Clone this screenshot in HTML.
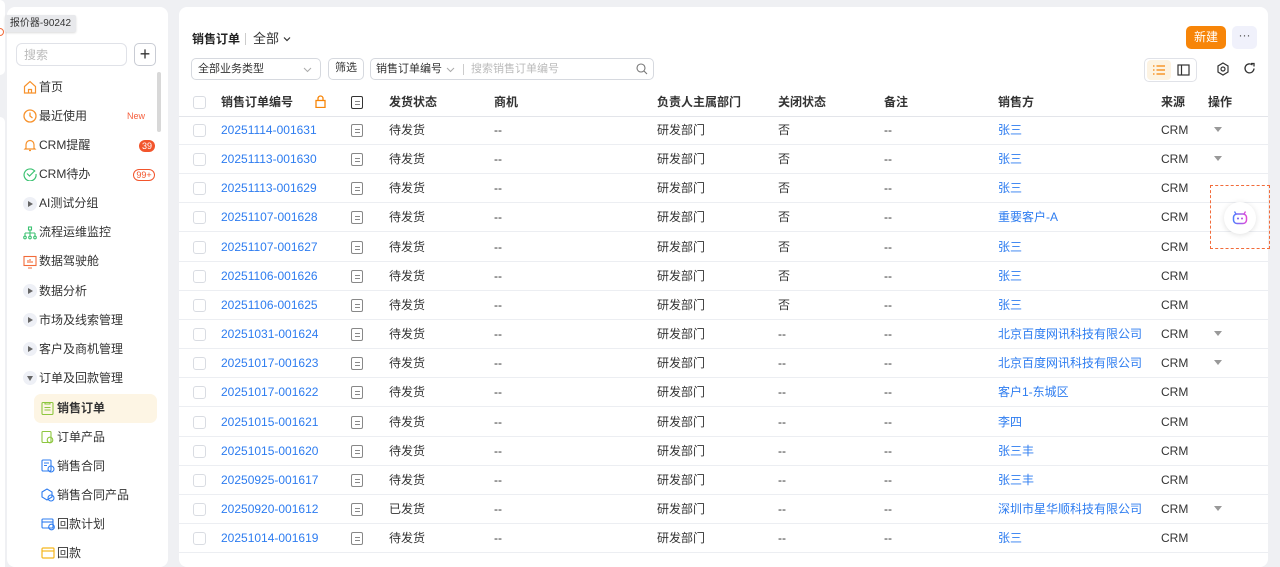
<!DOCTYPE html><html><head><meta charset="utf-8"><style>
*{box-sizing:border-box;margin:0;padding:0}
body{width:1280px;height:558px;overflow:hidden;background:#eff0f3;font-family:"Liberation Sans","Noto Sans CJK SC",sans-serif;font-size:12px;line-height:16px;color:#333;position:relative}
.a{position:absolute}
.side{left:7px;top:7px;width:161px;height:560px;background:#fff;border-radius:8px}
.main{left:179px;top:7px;width:1089px;height:560px;background:#fff;border-radius:8px}
.mi{position:absolute;left:24px;font-size:12px;line-height:16px;color:#333;white-space:nowrap}
.ic{position:absolute;left:16px;width:14px;height:14px}
.tri{position:absolute;left:16px;width:14px;height:14px;border-radius:50%;background:#eef0f6}
.tri:after{content:"";position:absolute;left:5px;top:3.5px;border-left:5px solid #666;border-top:3.5px solid transparent;border-bottom:3.5px solid transparent}
.tri.d:after{left:3.5px;top:5px;border-top:5px solid #666;border-left:3.5px solid transparent;border-right:3.5px solid transparent;border-bottom:0}
.row{position:absolute;left:0;width:1089px;height:29px;border-bottom:1px solid #eceef2}
.row span{position:absolute;top:6px;line-height:16px;height:16px;white-space:nowrap}
.cb{position:absolute;left:14px;top:8px;width:13px;height:13px;border:1px solid #d9dce2;border-radius:3px;background:#fff}
.lk{color:#2d7cf0}
.doc{position:absolute;left:172px;top:8px;width:12px;height:13px;border:1.2px solid #888;border-radius:2px}
.doc:before,.doc:after{content:"";position:absolute;left:2.5px;width:5px;height:1px;background:#888}
.doc:before{top:4px}.doc:after{top:7px}
.dd{position:absolute;left:1035px;top:11px;border-top:5px solid #999;border-left:4.5px solid transparent;border-right:4.5px solid transparent}
.hd span{font-weight:bold;color:#333}
</style></head><body>
<div class="a" style="left:0;top:0;width:5px;height:75px;background:#fff;border-radius:0 6px 6px 0"></div>
<div class="a" style="left:0;top:117px;width:5px;height:450px;background:#fff;border-radius:0 6px 0 0"></div>
<div class="a" style="left:-4px;top:28px;width:8px;height:8px;border:1.5px solid #f26b3a;border-radius:50%"></div>
<div class="a side">
<div class="a" style="left:9px;top:36px;width:111px;height:23px;border:1px solid #e0e2e8;border-radius:6px;color:#bbb;padding:3px 7px">搜索</div>
<div class="a" style="left:127px;top:36px;width:22px;height:23px;border:1px solid #c9ccd4;border-radius:5px;text-align:center;font-size:18px;line-height:20px;color:#333">+</div>
<div class="a" style="left:150px;top:65px;width:4px;height:60px;background:#d8d8d8;border-radius:2px"></div>
<svg class="ic" style="top:73px" viewBox="0 0 14 14"><path d="M1.5 6.5L7 1.5l5.5 5V13h-11z M5.5 13V9.5h3V13" fill="none" stroke="#f7922c" stroke-width="1.2"/></svg><div class="mi" style="top:72px;left:32px">首页</div>
<svg class="ic" style="top:102px" viewBox="0 0 14 14"><circle cx="7" cy="7" r="6" fill="none" stroke="#f7922c" stroke-width="1.3"/><path d="M7 3.5V7l2.5 2" fill="none" stroke="#f7922c" stroke-width="1.3"/></svg><div class="mi" style="top:101px;left:32px">最近使用</div><div class="a" style="left:120px;top:103px;font-size:9px;color:#f55e3c;line-height:12px">New</div>
<svg class="ic" style="top:131px" viewBox="0 0 14 14"><path d="M3 10V6.5a4 4 0 018 0V10l1 1H2z M6 12.5h2" fill="none" stroke="#f7922c" stroke-width="1.2"/></svg><div class="mi" style="top:130px;left:32px">CRM提醒</div><div class="a" style="left:132px;top:133px;width:16px;height:12px;border-radius:6px;background:#f2552c;color:#fff;font-size:9px;text-align:center;line-height:12px">39</div>
<svg class="ic" style="top:160px" viewBox="0 0 14 14"><path d="M12 4.5A6 6 0 1 0 13 7" fill="none" stroke="#3cc272" stroke-width="1.2"/><path d="M4 6.5l2.5 2.5L12 3.5" fill="none" stroke="#3cc272" stroke-width="1.2"/></svg><div class="mi" style="top:159px;left:32px">CRM待办</div><div class="a" style="left:126px;top:162px;width:22px;height:12px;border-radius:6px;border:1px solid #f2552c;color:#f2552c;font-size:9px;text-align:center;line-height:10px">99+</div>
<div class="tri" style="top:190px"></div><div class="mi" style="top:188px;left:32px">AI测试分组</div>
<svg class="ic" style="top:219px" viewBox="0 0 14 14"><g fill="none" stroke="#3cc272" stroke-width="1.1"><rect x="5.5" y="1" width="3" height="3"/><path d="M7 4v3M2 7h10M2 7v3M7 7v3M12 7v3"/><circle cx="2" cy="11.5" r="1.3"/><circle cx="7" cy="11.5" r="1.3"/><circle cx="12" cy="11.5" r="1.3"/></g></svg><div class="mi" style="top:217px;left:32px">流程运维监控</div>
<svg class="ic" style="top:248px" viewBox="0 0 14 14"><g fill="none" stroke="#f26b3a" stroke-width="1.1"><rect x="1" y="1.5" width="12" height="9"/><path d="M5 13h4M5 8V5M7 8V4M9 8V6"/></g></svg><div class="mi" style="top:246px;left:32px">数据驾驶舱</div>
<div class="tri" style="top:277px"></div><div class="mi" style="top:276px;left:32px">数据分析</div>
<div class="tri" style="top:306px"></div><div class="mi" style="top:305px;left:32px">市场及线索管理</div>
<div class="tri" style="top:335px"></div><div class="mi" style="top:334px;left:32px">客户及商机管理</div>
<div class="tri d" style="top:364px"></div><div class="mi" style="top:363px;left:32px">订单及回款管理</div>
<div class="a" style="left:27px;top:387px;width:123px;height:29px;background:#fdf5e4;border-radius:7px"></div>
<svg class="a" style="left:34px;top:394px;width:13px;height:14px" viewBox="0 0 13 14"><g fill="none" stroke="#8dc63f" stroke-width="1.1"><rect x="1" y="1.5" width="11" height="12" rx="1"/><path d="M4 1v2h5V1M3.5 6.5h6M3.5 9h6"/></g></svg><div class="mi" style="top:393px;left:50px;font-weight:bold">销售订单</div>
<svg class="a" style="left:34px;top:423px;width:13px;height:14px" viewBox="0 0 13 14"><g fill="none" stroke="#8dc63f" stroke-width="1.1"><rect x="1" y="1.5" width="9" height="11" rx="1"/><circle cx="9" cy="10" r="2.8"/></g></svg><div class="mi" style="top:422px;left:50px">订单产品</div>
<svg class="a" style="left:34px;top:452px;width:14px;height:14px" viewBox="0 0 14 14"><g fill="none" stroke="#2d7cf0" stroke-width="1.1"><rect x="1" y="1" width="9" height="11" rx="1"/><path d="M3 4h5M3 6.5h3"/><circle cx="10" cy="10" r="3"/></g></svg><div class="mi" style="top:451px;left:50px">销售合同</div>
<svg class="a" style="left:34px;top:481px;width:14px;height:14px" viewBox="0 0 14 14"><g fill="none" stroke="#2d7cf0" stroke-width="1.1"><path d="M1 4l5-3 5 3v5l-5 3-5-3z"/><circle cx="10" cy="10" r="3"/></g></svg><div class="mi" style="top:480px;left:50px">销售合同产品</div>
<svg class="a" style="left:34px;top:510px;width:14px;height:14px" viewBox="0 0 14 14"><g fill="none" stroke="#2d7cf0" stroke-width="1.1"><rect x="1" y="2" width="11" height="9" rx="1"/><path d="M1 5h11"/><circle cx="10.5" cy="10" r="2.8"/></g></svg><div class="mi" style="top:509px;left:50px">回款计划</div>
<svg class="a" style="left:34px;top:539px;width:14px;height:14px" viewBox="0 0 14 14"><g fill="none" stroke="#f5b61e" stroke-width="1.2"><rect x="1" y="2" width="12" height="10" rx="1"/><path d="M1 5h12"/></g></svg><div class="mi" style="top:538px;left:50px">回款</div>
</div>
<div class="a" style="left:5px;top:15px;width:71px;height:17px;background:#e8e9ec;border-radius:2px;font-size:10px;color:#333;line-height:17px;text-align:center;box-shadow:0 1px 2px rgba(0,0,0,.15)">报价器-90242</div>
<div class="a main">
<div class="a" style="left:13px;top:24px;font-size:12px;font-weight:bold;color:#222">销售订单</div>
<div class="a" style="left:66px;top:26px;width:1px;height:12px;background:#ccc"></div>
<div class="a" style="left:74px;top:24px;font-size:13px;color:#333">全部</div>
<svg class="a" style="left:104px;top:29px;width:8px;height:6px" viewBox="0 0 8 6"><path d="M1 1.5l3 3 3-3" fill="none" stroke="#333" stroke-width="1.2"/></svg>
<div class="a" style="left:1007px;top:19px;width:40px;height:23px;background:#f78508;border-radius:5px;color:#fff;text-align:center;line-height:23px;font-size:12px">新建</div>
<div class="a" style="left:1053px;top:19px;width:25px;height:23px;background:#f0f1fb;border-radius:5px;text-align:center;line-height:19px;color:#555">···</div>
<div class="a" style="left:12px;top:51px;width:130px;height:22px;border:1px solid #d6d9df;border-radius:5px;padding:2px 6px;font-size:11px">全部业务类型</div>
<svg class="a" style="left:124px;top:60px;width:9px;height:6px" viewBox="0 0 9 6"><path d="M1 1l3.5 3.5L8 1" fill="none" stroke="#aaa"/></svg>
<div class="a" style="left:149px;top:51px;width:36px;height:22px;border:1px solid #d6d9df;border-radius:5px;text-align:center;line-height:18px;font-size:11px">筛选</div>
<div class="a" style="left:191px;top:51px;width:284px;height:22px;border:1px solid #d6d9df;border-radius:5px"></div>
<div class="a" style="left:197px;top:54px;font-size:11px">销售订单编号</div>
<svg class="a" style="left:267px;top:60px;width:9px;height:6px" viewBox="0 0 9 6"><path d="M1 1l3.5 3.5L8 1" fill="none" stroke="#aaa"/></svg>
<div class="a" style="left:284px;top:57px;width:1px;height:11px;background:#ccc"></div>
<div class="a" style="left:292px;top:54px;font-size:11px;color:#bbb">搜索销售订单编号</div>
<svg class="a" style="left:457px;top:56px;width:12px;height:12px" viewBox="0 0 12 12"><circle cx="5" cy="5" r="4" fill="none" stroke="#777" stroke-width="1.1"/><path d="M8 8l3 3" stroke="#777" stroke-width="1.1"/></svg>
<div class="a" style="left:965px;top:51px;width:53px;height:24px;border:1px solid #e0e2e8;border-radius:5px"></div>
<div class="a" style="left:968px;top:53px;width:24px;height:20px;background:#fdf3e2;border-radius:4px"></div>
<svg class="a" style="left:973px;top:57px;width:14px;height:12px" viewBox="0 0 14 12"><path d="M1 2h1.5M1 6h1.5M1 10h1.5M4.5 2H13M4.5 6H13M4.5 10H13" stroke="#f78508" stroke-width="1.3"/></svg>
<svg class="a" style="left:998px;top:57px;width:13px;height:12px" viewBox="0 0 13 12"><rect x="1" y="1" width="11" height="10" fill="none" stroke="#333" stroke-width="1.2"/><path d="M4.5 1v10" stroke="#333" stroke-width="1.2"/></svg>
<svg class="a" style="left:1037px;top:55px;width:14px;height:14px" viewBox="0 0 14 14"><path d="M7 1l5 3v6l-5 3-5-3V4z" fill="none" stroke="#333" stroke-width="1.2"/><circle cx="7" cy="7" r="2" fill="none" stroke="#333" stroke-width="1.2"/></svg>
<svg class="a" style="left:1064px;top:55px;width:13px;height:13px" viewBox="0 0 13 13"><path d="M11 6.5A4.5 4.5 0 1 1 9.5 3" fill="none" stroke="#333" stroke-width="1.3"/><path d="M8 1.5h3v3" fill="none" stroke="#333" stroke-width="1.3"/></svg>
<div class="row hd" style="top:81px;height:29px;border-bottom:1px solid #e3e5ea">
<div class="cb"></div><span style="left:42px">销售订单编号</span>
<svg class="a" style="left:136px;top:7px;width:11px;height:13px" viewBox="0 0 11 13"><rect x="1" y="5.5" width="9" height="7" fill="none" stroke="#f78508" stroke-width="1.3"/><path d="M3 5.5V3.5a2.5 2.5 0 015 0v2" fill="none" stroke="#f78508" stroke-width="1.3"/></svg>
<div class="doc" style="border-color:#333"></div>
<span style="left:210px">发货状态</span><span style="left:315px">商机</span><span style="left:478px">负责人主属部门</span><span style="left:599px">关闭状态</span><span style="left:705px">备注</span><span style="left:819px">销售方</span><span style="left:982px">来源</span><span style="left:1029px">操作</span>
</div>
<div id="rows"></div>
<div class="a" style="left:1031px;top:178px;width:60px;height:64px;border:1.5px dashed #f26b3a"></div>
<div class="a" style="left:1045px;top:195px;width:32px;height:32px;border-radius:50%;background:#fff;box-shadow:0 1px 6px rgba(0,0,0,.12)"></div>
<svg class="a" style="left:1053px;top:203px;width:16px;height:15px" viewBox="0 0 16 15"><defs><linearGradient id="g" x1="0" x2="1"><stop offset="0" stop-color="#4f7dff"/><stop offset="1" stop-color="#e04ad8"/></linearGradient></defs><path d="M4 4L2.5 1.5M12 4l1.5-2.5" stroke="url(#g)" stroke-width="1.3"/><rect x="1.5" y="4" width="13" height="9.5" rx="3.5" fill="none" stroke="url(#g)" stroke-width="1.5"/><circle cx="6" cy="8.5" r="1" fill="#7b5cf0"/><circle cx="10" cy="8.5" r="1" fill="#b44fe0"/></svg>
</div>
<script>
var d=[["20251114-001631","待发货","否","张三",1],["20251113-001630","待发货","否","张三",1],["20251113-001629","待发货","否","张三",0],["20251107-001628","待发货","否","重要客户-A",0],["20251107-001627","待发货","否","张三",0],["20251106-001626","待发货","否","张三",0],["20251106-001625","待发货","否","张三",0],["20251031-001624","待发货","--","北京百度网讯科技有限公司",1],["20251017-001623","待发货","--","北京百度网讯科技有限公司",1],["20251017-001622","待发货","--","客户1-东城区",0],["20251015-001621","待发货","--","李四",0],["20251015-001620","待发货","--","张三丰",0],["20250925-001617","待发货","--","张三丰",0],["20250920-001612","已发货","--","深圳市星华顺科技有限公司",1],["20251014-001619","待发货","--","张三",0]];
var h="";d.forEach(function(r,i){h+='<div class="row" style="top:'+Math.round(109+i*29.15)+'px"><div class="cb"></div><span class="lk" style="left:42px">'+r[0]+'</span><div class="doc"></div><span style="left:210px">'+r[1]+'</span><span style="left:315px">--</span><span style="left:478px">研发部门</span><span style="left:599px">'+r[2]+'</span><span style="left:705px">--</span><span class="lk" style="left:819px">'+r[3]+'</span><span style="left:982px">CRM</span>'+(r[4]?'<div class="dd"></div>':'')+'</div>';});
document.getElementById("rows").outerHTML=h;
</script>
</body></html>
